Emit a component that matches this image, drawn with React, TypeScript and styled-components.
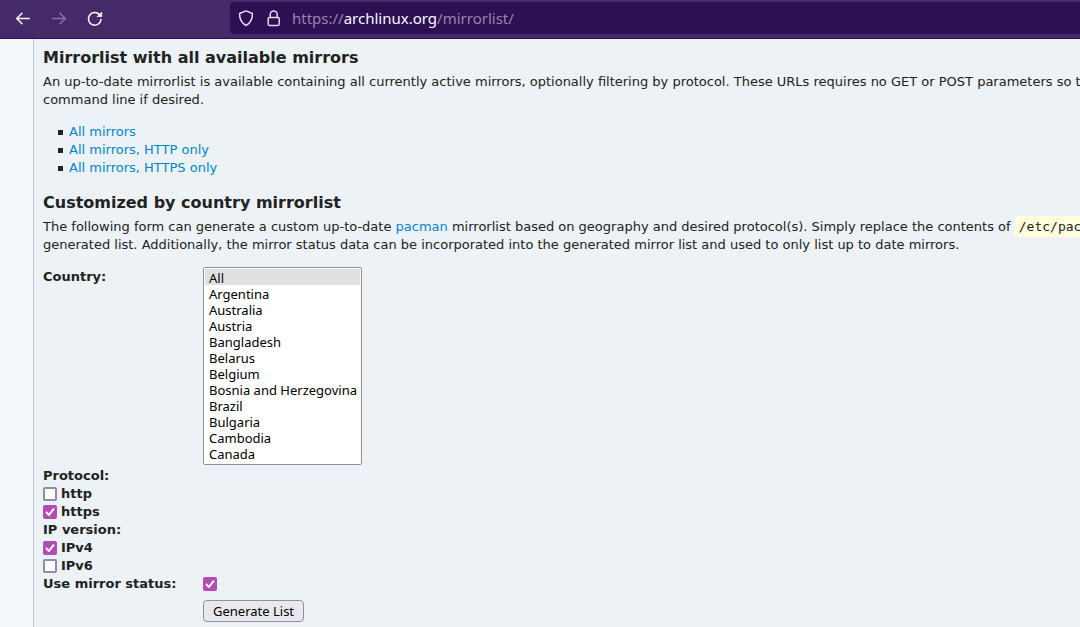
import React from "react";
import styled, { createGlobalStyle } from "styled-components";

const sans = `"DejaVu Sans", sans-serif`;
const ui = `"Noto Sans", sans-serif`;

const GlobalStyle = createGlobalStyle`
  *, *::before { box-sizing: border-box; }
  body {
    margin: 0;
    background: #f6f9fc;
    color: #222;
    font: 13px/18px ${sans};
    overflow: hidden;
  }
  #root { min-height: 100vh; display: flex; flex-direction: column; }
`;

const Toolbar = styled.header`
  display: flex;
  align-items: center;
  padding: 2px 0 4px 14px;
  background: #452a6a;
  border-bottom: 1px solid #2d0f54;
`;

const NavButtons = styled.nav`
  display: flex;
  gap: 18px;
  width: 216px;
`;

const NavButton = styled.button`
  display: grid;
  place-items: center;
  width: 18px;
  height: 18px;
  padding: 0;
  border: 0;
  background: none;
  color: #fbf9ff;
  &:disabled { color: #89769f; }
`;

const AddressBar = styled.div`
  flex: 1;
  display: flex;
  align-items: center;
  gap: 12px;
  height: 32px;
  padding-left: 8px;
  border-radius: 4px 0 0 4px;
  background: #2d0f54;
  color: #e3dcec;
`;

const Url = styled.span`
  font: 15px/20px ${ui};
  color: #9685ab;
  white-space: nowrap;
`;

const Host = styled.span`
  color: #fbf9ff;
`;

const Icon = styled.svg`
  display: block;
  fill: none;
  stroke: currentColor;
  stroke-linecap: round;
  stroke-linejoin: round;
`;

const Page = styled.main`
  flex: 1;
  margin-left: 33px;
  padding: 8px 0 5px 9px;
  border-left: 1px solid #bcc6d6;
  background: #ecf2f6;
  overflow: hidden;
`;

const Heading = styled.h3`
  margin: 0 0 4px;
  font-size: 16px;
  line-height: 22px;
`;

const Paragraph = styled.p`
  margin: 0 0 13px;
  line-height: 18px;
  white-space: nowrap;
`;

const Link = styled.a`
  color: #08c;
  text-decoration: none;
`;

const Code = styled.code`
  padding: 3px 4px;
  background: #ffd;
  font: 13px/18px "DejaVu Sans Mono", monospace;
`;

const MirrorLinks = styled.ul`
  margin: 14px 0;
  padding: 0 0 1px 15px;
  list-style: none;
`;

const MirrorItem = styled.li`
  display: flex;
  align-items: center;
  gap: 6px;
  &::before {
    content: "";
    width: 5px;
    height: 5px;
    background: #222;
  }
`;

const Form = styled.form`
  font-weight: bold;
`;

const Row = styled.div`
  display: grid;
  grid-template-columns: 160px 1fr;
  align-items: start;
  justify-items: start;
`;

const CountryRow = styled(Row)`
  margin-bottom: 2px;
  line-height: 20px;
`;

const CountryList = styled.select`
  width: 159px;
  height: 198px;
  padding: 1px;
  border: 1px solid #8f8f9d;
  border-radius: 2px;
  background: #fff;
  color: #000;
  font: 13px/16px ${ui};
  scrollbar-width: none;
  outline: 0;
`;

const CountryOption = styled.option`
  height: 16px;
  min-height: 16px;
  padding: 0 4px;
  line-height: 16px;
  &:checked {
    color: #000;
    background: #e0e0e0 linear-gradient(#e0e0e0, #e0e0e0);
  }
`;

const Group = styled.fieldset`
  margin: 0;
  padding: 0;
  border: 0;
`;

const Legend = styled.legend`
  padding: 0;
`;

const Choice = styled.div`
  display: flex;
  align-items: flex-start;
  gap: 4px;
  height: 18px;
`;

const Tick = styled.span`
  display: grid;
  width: 14px;
  height: 14px;
  margin-top: 2px;
  > * { grid-area: 1 / 1; }
  > svg { pointer-events: none; color: #fff; visibility: hidden; }
  > input:checked + svg { visibility: visible; }
`;

const TickInput = styled.input`
  appearance: none;
  width: 14px;
  height: 14px;
  margin: 0;
  border: 2px solid #8f8f9d;
  border-radius: 2px;
  background: #fff;
  &:checked { border-color: #b24bb5; background: #b24bb5; }
`;

const Submit = styled.button`
  grid-column: 2;
  height: 22px;
  margin-top: 7px;
  padding: 0 9px;
  border: 1px solid #8f8f9d;
  border-radius: 4px;
  background: #e9e9ed;
  color: #000;
  font: 13px/18px ${ui};
`;

const countries = [
  "All", "Argentina", "Australia", "Austria", "Bangladesh", "Belarus",
  "Belgium", "Bosnia and Herzegovina", "Brazil", "Bulgaria", "Cambodia", "Canada",
];

function Checkbox({ id, checked }: { id: string; checked?: boolean }) {
  return (
    <Tick>
      <TickInput type="checkbox" id={id} defaultChecked={checked} />
      <Icon width="14" height="14" viewBox="0 0 14 14" strokeWidth="2" aria-hidden="true">
        <path d="M3.5 7.5 L6 10 L10.5 4.2" />
      </Icon>
    </Tick>
  );
}

function LabelledChoice({ id, label, checked }: { id: string; label: string; checked?: boolean }) {
  return (
    <Choice>
      <Checkbox id={id} checked={checked} />
      <label htmlFor={id}>{label}</label>
    </Choice>
  );
}

export default function App() {
  return (
    <>
      <GlobalStyle />
      <Toolbar>
        <NavButtons aria-label="History">
          <NavButton aria-label="Back">
            <Icon width="18" height="18" viewBox="0 0 18 18" strokeWidth="1.5">
              <path d="M15.3 9.5 H2.7 M8 4.2 L2.7 9.5 L8 14.8" />
            </Icon>
          </NavButton>
          <NavButton aria-label="Forward" disabled>
            <Icon width="18" height="18" viewBox="0 0 18 18" strokeWidth="1.5">
              <path d="M2.7 9.5 H15.3 M10 4.2 L15.3 9.5 L10 14.8" />
            </Icon>
          </NavButton>
          <NavButton aria-label="Reload">
            <Icon width="18" height="18" viewBox="0 0 18 18" strokeWidth="1.5">
              <path d="M15 10.6 A6.3 6.3 0 1 1 13.2 5.4" />
              <path d="M15.7 3.4 V7.6 H11.5 Z" fill="currentColor" strokeWidth="0.8" />
            </Icon>
          </NavButton>
        </NavButtons>
        <AddressBar>
          <Icon width="16" height="18" viewBox="0 0 16 18" strokeWidth="1.5">
            <path d="M8 1.9 L14.4 4.5 C14.6 10 12.5 13.9 8 16.5 C3.5 13.9 1.4 10 1.6 4.5 Z" />
          </Icon>
          <Icon width="14" height="18" viewBox="0 0 14 18" strokeWidth="1.5">
            <rect x="2.2" y="8.5" width="11" height="7.9" rx="1.3" />
            <path d="M4.2 8.4 V5.4 A3.5 3.5 0 0 1 11.2 5.4 V8.4" />
          </Icon>
          <Url>https://<Host>archlinux.org</Host>/mirrorlist/</Url>
        </AddressBar>
      </Toolbar>
      <Page>
        <Heading>Mirrorlist with all available mirrors</Heading>
        <Paragraph>
          An up-to-date mirrorlist is available containing all currently active mirrors, optionally
          filtering by protocol. These URLs requires no GET or POST parameters so t
          <br />
          command line if desired.
        </Paragraph>
        <MirrorLinks>
          <MirrorItem><Link href="#all">All mirrors</Link></MirrorItem>
          <MirrorItem><Link href="#http">All mirrors, HTTP only</Link></MirrorItem>
          <MirrorItem><Link href="#https">All mirrors, HTTPS only</Link></MirrorItem>
        </MirrorLinks>
        <Heading>Customized by country mirrorlist</Heading>
        <Paragraph>
          The following form can generate a custom up-to-date <Link href="#pacman">pacman</Link> mirrorlist
          based on geography and desired protocol(s). Simply replace the contents
          of <Code>/etc/pac</Code>
          <br />
          generated list. Additionally, the mirror status data can be incorporated into the generated mirror
          list and used to only list up to date mirrors.
        </Paragraph>
        <Form onSubmit={(e) => e.preventDefault()}>
          <CountryRow>
            <label htmlFor="country">Country:</label>
            <CountryList id="country" multiple size={12} defaultValue={["All"]}>
              {countries.map((name) => (
                <CountryOption key={name} value={name}>{name}</CountryOption>
              ))}
            </CountryList>
          </CountryRow>
          <Group>
            <Legend>Protocol:</Legend>
            <LabelledChoice id="http" label="http" />
            <LabelledChoice id="https" label="https" checked />
          </Group>
          <Group>
            <Legend>IP version:</Legend>
            <LabelledChoice id="ipv4" label="IPv4" checked />
            <LabelledChoice id="ipv6" label="IPv6" />
          </Group>
          <Row>
            <label htmlFor="status">Use mirror status:</label>
            <Checkbox id="status" checked />
          </Row>
          <Row>
            <Submit type="submit">Generate List</Submit>
          </Row>
        </Form>
      </Page>
    </>
  );
}
